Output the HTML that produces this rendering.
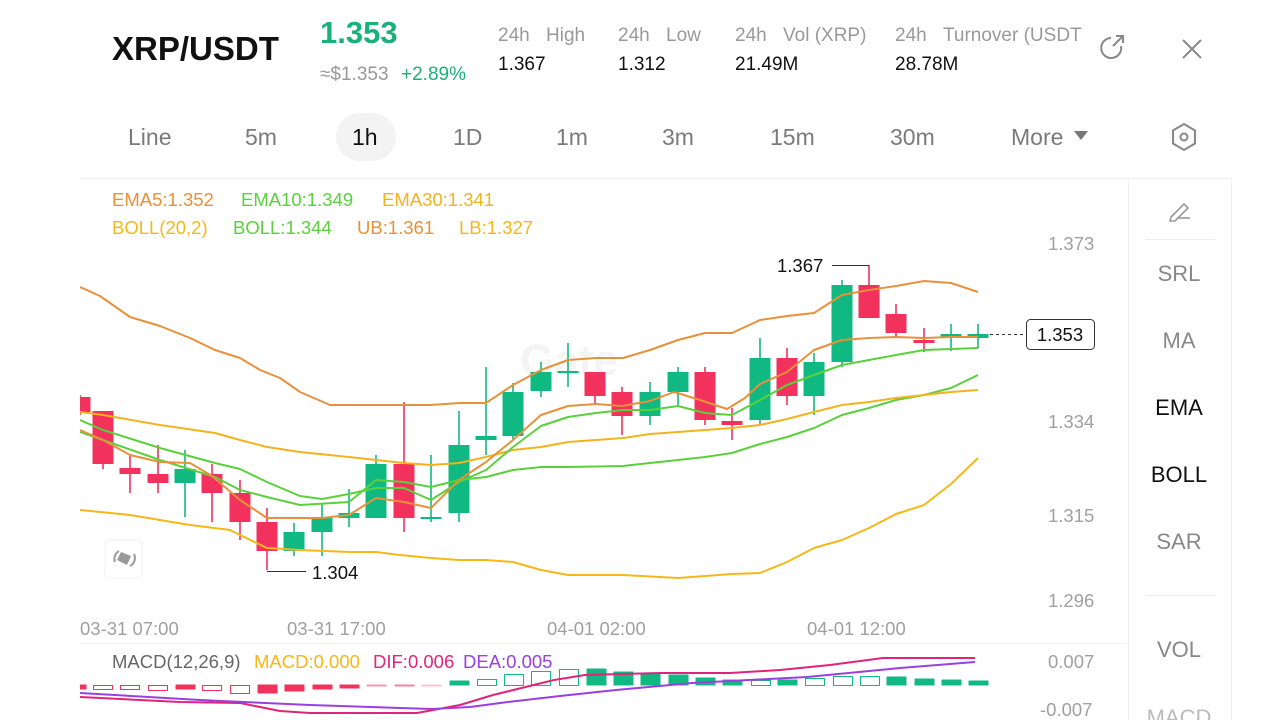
<!DOCTYPE html>
<html><head><meta charset="utf-8"><style>
html,body{margin:0;padding:0;background:#fff;width:1280px;height:720px;overflow:hidden}
svg{display:block;font-family:"Liberation Sans",sans-serif}
</style></head><body>
<svg width="1280" height="720" viewBox="0 0 1280 720" xmlns="http://www.w3.org/2000/svg">
<defs><clipPath id="ch"><rect x="80" y="180" width="1046" height="540"/></clipPath></defs>
<!-- header -->
<text x="112" y="60" font-size="33" font-weight="bold" fill="#111">XRP/USDT</text>
<text x="320" y="43" font-size="31" font-weight="bold" fill="#17b27a">1.353</text>
<text x="320" y="80" font-size="19" fill="#999">≈$1.353</text>
<text x="401" y="80" font-size="19" fill="#17b27a">+2.89%</text>
<g font-size="19" fill="#999">
<text x="498" y="41">24h</text><text x="546" y="41">High</text>
<text x="618" y="41">24h</text><text x="666" y="41">Low</text>
<text x="735" y="41">24h</text><text x="783" y="41">Vol (XRP)</text>
<text x="895" y="41">24h</text><text x="943" y="41">Turnover (USDT</text>
</g>
<rect x="1083" y="15" width="20" height="40" fill="#fff"/>
<g font-size="19" fill="#111">
<text x="498" y="70">1.367</text><text x="618" y="70">1.312</text>
<text x="735" y="70">21.49M</text><text x="895" y="70">28.78M</text>
</g>
<!-- share & close icons -->
<path d="M1121 46 A10 10 0 1 1 1111 38" fill="none" stroke="#888" stroke-width="2"/>
<path d="M1113 46 L1123 36 M1116 36 L1123 36 L1123 43" fill="none" stroke="#888" stroke-width="2"/>
<path d="M1183 40 L1201 58 M1201 40 L1183 58" stroke="#888" stroke-width="2"/>
<!-- tabs -->
<rect x="336" y="113" width="60" height="48" rx="24" fill="#f3f3f3"/>
<g font-size="23" fill="#7a7a7a">
<text x="128" y="145">Line</text><text x="245" y="145">5m</text>
<text x="352" y="145" fill="#111">1h</text><text x="453" y="145">1D</text>
<text x="556" y="145">1m</text><text x="662" y="145">3m</text>
<text x="770" y="145">15m</text><text x="890" y="145">30m</text>
<text x="1011" y="145">More</text>
</g>
<path d="M1074 131 L1088 131 L1081 140 Z" fill="#777"/>
<path d="M1184 124 L1195 130.5 L1195 143.5 L1184 150 L1173 143.5 L1173 130.5 Z" fill="none" stroke="#888" stroke-width="2"/>
<circle cx="1184" cy="137" r="3.5" fill="none" stroke="#888" stroke-width="2"/>
<!-- frame lines -->
<line x1="80" y1="178.5" x2="1232" y2="178.5" stroke="#f0f0f0"/>
<line x1="1128.5" y1="179" x2="1128.5" y2="720" stroke="#f0f0f0"/>
<line x1="1231.5" y1="179" x2="1231.5" y2="720" stroke="#f0f0f0"/>
<line x1="1145" y1="239.5" x2="1215" y2="239.5" stroke="#eee"/>
<line x1="1145" y1="595.5" x2="1215" y2="595.5" stroke="#eee"/>
<line x1="80" y1="643.5" x2="1126" y2="643.5" stroke="#f2f2f2"/>
<!-- right panel -->
<path d="M1171 217 L1184 204 L1188 208 L1175 221 L1170 221 Z" fill="none" stroke="#999" stroke-width="1.6"/>
<line x1="1178" y1="218" x2="1190" y2="218" stroke="#999" stroke-width="1.6"/>
<g font-size="22" fill="#888" text-anchor="middle">
<text x="1179" y="281">SRL</text><text x="1179" y="348">MA</text>
<text x="1179" y="415" fill="#111">EMA</text><text x="1179" y="482" fill="#111">BOLL</text>
<text x="1179" y="549">SAR</text><text x="1179" y="657">VOL</text>
<text x="1179" y="725" fill="#bbb">MACD</text>
</g>
<!-- legends -->
<g font-size="18.5">
<text x="112" y="206" fill="#e8913a">EMA5:1.352</text>
<text x="241" y="206" fill="#5ad13c">EMA10:1.349</text>
<text x="382" y="206" fill="#f2b31c">EMA30:1.341</text>
<text x="112" y="234" fill="#f5b818">BOLL(20,2)</text>
<text x="233" y="234" fill="#5ad13c">BOLL:1.344</text>
<text x="357" y="234" fill="#e8913a">UB:1.361</text>
<text x="459" y="234" fill="#f5b818">LB:1.327</text>
</g>
<!-- axis -->
<g font-size="18.5" fill="#a0a0a0">
<text x="1048" y="250">1.373</text><text x="1048" y="428">1.334</text>
<text x="1048" y="522">1.315</text><text x="1048" y="607">1.296</text>
<text x="1048" y="668">0.007</text><text x="1040" y="716">-0.007</text>
<text x="80" y="635">03-31 07:00</text><text x="287" y="635">03-31 17:00</text>
<text x="547" y="635">04-01 02:00</text><text x="807" y="635">04-01 12:00</text>
</g>
<text x="520" y="375" font-size="44" font-weight="bold" fill="#f4f4f4">Gate</text>
<g clip-path="url(#ch)" fill="none" stroke-width="2" stroke-linejoin="round">
<!-- candles -->
<g stroke-width="1.6">
<g stroke="#f2325c" fill="#f2325c">
<line x1="80" y1="395" x2="80" y2="415"/><rect x="69.5" y="397" width="21" height="15" stroke="none"/>
<line x1="103" y1="411" x2="103" y2="469"/><rect x="92.5" y="411" width="21" height="53" stroke="none"/>
<line x1="130" y1="455" x2="130" y2="493"/><rect x="119.5" y="468" width="21" height="6" stroke="none"/>
<line x1="158" y1="445" x2="158" y2="493"/><rect x="147.5" y="474" width="21" height="9" stroke="none"/>
<line x1="212" y1="464" x2="212" y2="522"/><rect x="201.5" y="474" width="21" height="19" stroke="none"/>
<line x1="240" y1="480" x2="240" y2="540"/><rect x="229.5" y="493" width="21" height="29" stroke="none"/>
<line x1="267" y1="508" x2="267" y2="570"/><rect x="256.5" y="522" width="21" height="29" stroke="none"/>
<line x1="404" y1="402" x2="404" y2="532"/><rect x="393.5" y="464" width="21" height="54" stroke="none"/>
<line x1="595" y1="372" x2="595" y2="405"/><rect x="584.5" y="372" width="21" height="24" stroke="none"/>
<line x1="622" y1="387" x2="622" y2="435"/><rect x="611.5" y="392" width="21" height="24" stroke="none"/>
<line x1="705" y1="367" x2="705" y2="425"/><rect x="694.5" y="372" width="21" height="48" stroke="none"/>
<line x1="732" y1="408" x2="732" y2="440"/><rect x="721.5" y="421" width="21" height="4" stroke="none"/>
<line x1="787" y1="348" x2="787" y2="405"/><rect x="776.5" y="358" width="21" height="38" stroke="none"/>
<line x1="869" y1="265" x2="869" y2="318"/><rect x="858.5" y="285" width="21" height="33" stroke="none"/>
<line x1="896" y1="304" x2="896" y2="338"/><rect x="885.5" y="314" width="21" height="19" stroke="none"/>
<line x1="924" y1="328" x2="924" y2="352"/><rect x="913.5" y="340" width="21" height="3" stroke="none"/>
</g>
<g stroke="#10b981" fill="#10b981">
<line x1="185" y1="450" x2="185" y2="517"/><rect x="174.5" y="469" width="21" height="14" stroke="none"/>
<line x1="294" y1="523" x2="294" y2="556"/><rect x="283.5" y="532" width="21" height="19" stroke="none"/>
<line x1="322" y1="503" x2="322" y2="556"/><rect x="311.5" y="518" width="21" height="14" stroke="none"/>
<line x1="349" y1="489" x2="349" y2="527"/><rect x="338.5" y="513" width="21" height="5" stroke="none"/>
<line x1="376" y1="455" x2="376" y2="518"/><rect x="365.5" y="464" width="21" height="54" stroke="none"/>
<line x1="431" y1="455" x2="431" y2="522"/><rect x="420.5" y="517" width="21" height="2" stroke="none"/>
<line x1="459" y1="411" x2="459" y2="522"/><rect x="448.5" y="445" width="21" height="68" stroke="none"/>
<line x1="486" y1="367" x2="486" y2="455"/><rect x="475.5" y="436" width="21" height="4" stroke="none"/>
<line x1="513" y1="383" x2="513" y2="440"/><rect x="502.5" y="392" width="21" height="44" stroke="none"/>
<line x1="541" y1="362" x2="541" y2="397"/><rect x="530.5" y="372" width="21" height="19" stroke="none"/>
<line x1="568" y1="343" x2="568" y2="387"/><rect x="557.5" y="371" width="21" height="2" stroke="none"/>
<line x1="650" y1="382" x2="650" y2="425"/><rect x="639.5" y="392" width="21" height="24" stroke="none"/>
<line x1="678" y1="367" x2="678" y2="406"/><rect x="667.5" y="372" width="21" height="20" stroke="none"/>
<line x1="760" y1="338" x2="760" y2="425"/><rect x="749.5" y="358" width="21" height="62" stroke="none"/>
<line x1="814" y1="353" x2="814" y2="415"/><rect x="803.5" y="362" width="21" height="34" stroke="none"/>
<line x1="842" y1="280" x2="842" y2="367"/><rect x="831.5" y="285" width="21" height="77" stroke="none"/>
<line x1="951" y1="324" x2="951" y2="351"/><rect x="940.5" y="334" width="21" height="4" stroke="none"/>
<line x1="978" y1="324" x2="978" y2="348"/><rect x="967.5" y="334" width="21" height="4" stroke="none"/>
</g>
</g>
<!-- lines -->
<polyline stroke="#e8913a" points="80,287 100,296 130,317 160,326 190,338 215,350 240,358 260,370 280,378 300,392 330,405 370,405 430,405 460,403 486,403 513,385 541,370 568,360 596,358 623,358 650,350 678,340 705,333 732,333 760,320 787,316 814,313 842,295 869,290 896,286 924,281 951,283 978,292"/>
<polyline stroke="#f5b818" points="80,510 130,515 160,520 190,525 230,530 240,535 267,548 300,550 350,552 376,552 400,555 431,558 459,560 486,560 513,562 541,570 568,575 623,575 678,578 705,576 732,574 760,573 787,562 814,548 842,540 869,528 896,514 924,505 951,484 978,458"/>
<polyline stroke="#5ad13c" points="80,432 103,440 160,460 215,477 240,490 267,497 300,505 349,502 376,480 404,482 431,487 459,480 486,477 513,470 541,467 568,467 623,466 650,463 678,460 705,457 732,453 760,444 787,437 814,428 842,415 869,408 896,400 924,395 951,388 978,375"/>
<polyline stroke="#f2b31c" points="80,412 103,415 160,425 215,433 240,440 267,447 300,452 349,457 376,460 404,463 431,465 459,463 486,457 513,450 541,447 568,442 596,440 623,438 650,434 678,432 705,430 732,428 760,425 787,419 814,412 842,405 869,402 896,398 924,395 951,392 978,390"/>
<polyline stroke="#5ad13c" points="80,420 103,430 160,448 215,463 240,469 267,482 300,496 322,499 349,494 376,488 404,488 431,500 459,482 486,470 513,447 541,426 568,417 596,413 623,410 650,410 678,406 705,413 732,415 760,400 787,385 814,375 842,365 869,360 896,355 924,350 951,349 978,348"/>
<polyline stroke="#e8913a" points="80,430 103,440 130,455 160,462 190,463 212,476 240,500 267,518 294,518 322,518 349,515 376,498 404,502 431,508 459,480 486,462 513,440 541,415 568,406 596,404 622,406 650,401 674,392 700,400 727,409 745,398 760,384 787,372 814,350 842,340 869,338 896,337 924,338 951,337 978,337"/>
<!-- MACD bars -->
<g stroke-width="1">
<g fill="#f2325c" stroke="#f2325c">
<rect x="74" y="685" width="12" height="4"/>
<rect x="93.5" y="685.5" width="19" height="4" fill="none"/>
<rect x="120.5" y="685.5" width="19" height="4" fill="none"/>
<rect x="148.5" y="685.5" width="19" height="5" fill="none"/>
<rect x="176" y="685" width="19" height="4"/>
<rect x="202.5" y="685.5" width="19" height="5" fill="none"/>
<rect x="230.5" y="685.5" width="19" height="8" fill="none"/>
<rect x="258" y="685" width="19" height="8"/>
<rect x="285" y="685" width="19" height="6"/>
<rect x="313" y="685" width="19" height="4"/>
<rect x="340" y="685" width="19" height="3"/>
<rect x="367" y="685" width="19" height="1" opacity="0.5"/>
<rect x="395" y="685" width="19" height="1" opacity="0.6"/>
<rect x="422" y="685" width="19" height="1" opacity="0.3"/>
</g>
<g fill="#10b981" stroke="#10b981">
<rect x="450" y="681" width="19" height="4"/>
<rect x="477.5" y="679.5" width="19" height="6" fill="none"/>
<rect x="504.5" y="674.5" width="19" height="11" fill="none"/>
<rect x="531.5" y="671.5" width="19" height="14" fill="none"/>
<rect x="559.5" y="669.5" width="19" height="16" fill="none"/>
<rect x="587" y="669" width="19" height="16"/>
<rect x="614" y="672" width="19" height="13"/>
<rect x="641" y="674" width="19" height="11"/>
<rect x="669" y="675" width="19" height="10"/>
<rect x="696" y="678" width="19" height="7"/>
<rect x="723" y="680" width="19" height="5"/>
<rect x="751.5" y="680.5" width="19" height="5" fill="none"/>
<rect x="778" y="680" width="19" height="5"/>
<rect x="805.5" y="678.5" width="19" height="7" fill="none"/>
<rect x="833.5" y="676.5" width="19" height="9" fill="none"/>
<rect x="860.5" y="676.5" width="19" height="9" fill="none"/>
<rect x="887" y="677" width="19" height="8"/>
<rect x="915" y="679" width="19" height="6"/>
<rect x="942" y="680" width="19" height="5"/>
<rect x="969" y="681" width="19" height="4"/>
</g>
</g>
<polyline stroke="#e0247a" points="80,697 180,702 240,703 280,711 310,713 417,713 460,705 493,695 554,680 585,675 661,673 730,673 780,670 830,665 883,658 975,658"/>
<polyline stroke="#9b3fe0" points="80,693 200,700 310,705 432,709 470,707 508,702 560,696 616,690 692,683 807,677 900,668 975,662"/>
</g>
<!-- price annotations -->
<line x1="869" y1="265.5" x2="832" y2="265.5" stroke="#333"/>
<text x="777" y="272" font-size="18.5" fill="#111">1.367</text>
<line x1="267" y1="571.5" x2="306" y2="571.5" stroke="#333"/>
<text x="312" y="579" font-size="18.5" fill="#111">1.304</text>
<line x1="990" y1="334.5" x2="1026" y2="334.5" stroke="#333" stroke-dasharray="3,3"/>
<rect x="1026.5" y="319.5" width="68" height="30" rx="4" fill="#fff" stroke="#333"/>
<text x="1060" y="341" font-size="18.5" fill="#111" text-anchor="middle">1.353</text>
<!-- small icon -->
<rect x="105" y="540" width="37" height="38" rx="4" fill="#fff" stroke="#f0f0f0"/>
<path d="M117 560 L121 552 L131 556 L127 565 Z" fill="#999"/>
<path d="M115 562 A9 9 0 0 1 119 551 M134 554 A9 9 0 0 1 130 566" fill="none" stroke="#999" stroke-width="2"/>
<!-- MACD legend -->
<g font-size="18.5">
<text x="112" y="668" fill="#666">MACD(12,26,9)</text>
<text x="254" y="668" fill="#f5b818">MACD:0.000</text>
<text x="373" y="668" fill="#e0247a">DIF:0.006</text>
<text x="463" y="668" fill="#9b3fe0">DEA:0.005</text>
</g>
</svg>
</body></html>
